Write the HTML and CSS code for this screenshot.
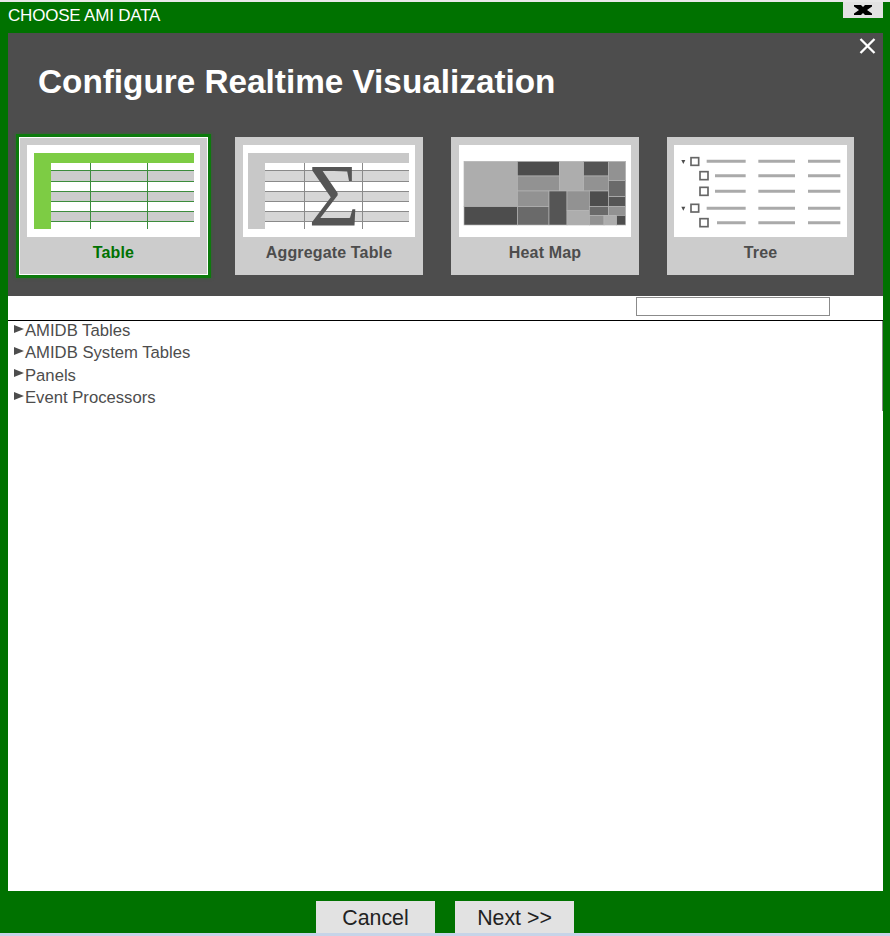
FILE: index.html
```html
<!DOCTYPE html>
<html lang="en">

<head>
  <meta charset="UTF-8">
  <title>Choose AMI Data</title>
  <link rel="stylesheet" href="styles.css">
</head>

<body>
  <div class="window">
    <div class="titlebar">
      <span class="title">CHOOSE AMI DATA</span>
      <button class="win-close" aria-label="Close">
        <svg width="18" height="10" viewBox="0 0 18 10">
          <path d="M0 0h7l2 2 2-2h7v1.500l-5 3.500 5 3.500V10h-7L9 8l-2 2H0V8.500L5 5 0 1.500z" fill="#000" />
        </svg>
      </button>
    </div>

    <div class="dialog">
      <div class="dialog-head">
        <button class="dialog-close" aria-label="Close">
          <svg width="17" height="16" viewBox="0 0 17 16">
            <path d="M1.500 1l14 14M15.500 1l-14 14" stroke="#fff" stroke-width="2.300" fill="none" />
          </svg>
        </button>
        <h1>Configure Realtime Visualization</h1>
        <div class="cards">
          <div class="card selected">
            <svg class="thumb" viewBox="0 0 173 92">
              <rect x="24" y="25" width="143" height="11" fill="#ccc" />
              <rect x="24" y="46" width="143" height="10" fill="#ccc" />
              <rect x="24" y="66" width="143" height="10" fill="#ccc" />
              <path d="M24 25.500h143M24 36.500h143M24 46.500h143M24 56.500h143M24 66.500h143M24 76.500h143M63.500 18v66M120.500 18v66" stroke="#3c8c3c" fill="none" />
              <path d="M7 8h160v10H24v66H7z" fill="#7dcc44" />
            </svg>
            <span>Table</span>
          </div>
          <div class="card">
            <svg class="thumb" viewBox="0 0 172 92">
              <rect x="22" y="25" width="144" height="11" fill="#d6d6d6" />
              <rect x="22" y="46" width="144" height="10" fill="#d6d6d6" />
              <rect x="22" y="66" width="144" height="10" fill="#d6d6d6" />
              <path d="M22 25.500h144M22 36.500h144M22 46.500h144M22 56.500h144M22 66.500h144M22 76.500h144M61.500 18v66M119.500 18v66" stroke="#8a8a8a" fill="none" />
              <path d="M5 8h161v10H22v66H5z" fill="#c8c8c8" />
              <text class="sigma" x="91" y="80">Σ</text>
            </svg>
            <span>Aggregate Table</span>
          </div>
          <div class="card">
            <svg class="thumb heat" viewBox="42 45 516 276">
              <rect x="57" y="94" width="160" height="136" fill="#adadad" />
              <rect x="57" y="230" width="160" height="55" fill="#4d4d4d" />
              <rect x="217" y="94" width="126" height="44" fill="#4d4d4d" />
              <rect x="217" y="138" width="126" height="45" fill="#929292" />
              <rect x="343" y="94" width="73" height="89" fill="#adadad" />
              <rect x="416" y="94" width="74" height="44" fill="#555" />
              <rect x="416" y="138" width="74" height="45" fill="#929292" />
              <rect x="490" y="94" width="52" height="58" fill="#929292" />
              <rect x="490" y="152" width="52" height="48" fill="#6a6a6a" />
              <rect x="217" y="183" width="95" height="47" fill="#929292" />
              <rect x="217" y="230" width="95" height="55" fill="#6a6a6a" />
              <rect x="312" y="183" width="54" height="102" fill="#555" />
              <rect x="366" y="183" width="67" height="58" fill="#929292" />
              <rect x="366" y="241" width="67" height="44" fill="#adadad" />
              <rect x="433" y="183" width="57" height="46" fill="#4d4d4d" />
              <rect x="490" y="200" width="52" height="30" fill="#555" />
              <rect x="433" y="229" width="57" height="27" fill="#6a6a6a" />
              <rect x="490" y="230" width="52" height="26" fill="#929292" />
              <rect x="433" y="256" width="44" height="29" fill="#929292" />
              <rect x="477" y="256" width="38" height="29" fill="#adadad" />
              <rect x="515" y="256" width="27" height="29" fill="#4d4d4d" />
            </svg>
            <span>Heat Map</span>
          </div>
          <div class="card">
            <svg class="thumb" viewBox="57 45 519 276">
              <g fill="#4d4d4d">
                <path d="M79 90h12l-6 12z" />
                <path d="M79 230h12l-6 12z" />
              </g>
              <g fill="#fff" stroke="#666" stroke-width="5">
                <rect x="108" y="83" width="23" height="23" />
                <rect x="135" y="125" width="24" height="24" />
                <rect x="135" y="172" width="24" height="24" />
                <rect x="108" y="223" width="23" height="23" />
                <rect x="135" y="266" width="24" height="24" />
              </g>
              <path d="M155 94h117M310 94h110M459 94h97M180 137h92M310 137h110M459 137h97M180 184h92M310 184h110M459 184h97M155 235h117M310 235h110M459 235h97M186 278h86M310 278h110M459 278h97" stroke="#aaa" stroke-width="9" fill="none" />
            </svg>
            <span>Tree</span>
          </div>
        </div>
      </div>

      <div class="search-row">
        <input class="search" type="text">
      </div>

      <div class="tree">
        <div class="tree-item"><i class="arrow"></i>AMIDB Tables</div>
        <div class="tree-item"><i class="arrow"></i>AMIDB System Tables</div>
        <div class="tree-item"><i class="arrow"></i>Panels</div>
        <div class="tree-item"><i class="arrow"></i>Event Processors</div>
      </div>
    </div>

    <div class="footer">
      <button class="btn">Cancel</button>
      <button class="btn">Next &gt;&gt;</button>
    </div>
  </div>
</body>

</html>
```

FILE: styles.css
```css
html,
body {
  margin: 0;
  padding: 0;
  height: 100%;
  overflow: hidden;
}

body {
  font-family: 'Liberation Sans', Arial, sans-serif;
  background-color: #c6d4e8;
}

.window {
  height: 931px;
  margin-top: 2px;
  box-shadow: 0 -2px 0 #e8e8e8;
  background-color: #007200;
  display: flex;
  flex-direction: column;
}

.titlebar {
  height: 31px;
  flex: none;
  display: flex;
  justify-content: space-between;
  align-items: flex-start;
  padding: 0 7px 0 8px;
}

.title {
  color: #fff;
  font-size: 17px;
  letter-spacing: -0.2px;
  line-height: 27px;
}

.win-close {
  width: 40px;
  height: 16px;
  padding: 0;
  border: none;
  background-color: #e2e2e2;
  display: flex;
  align-items: flex-start;
  justify-content: center;
}

.win-close svg {
  margin-top: 3px;
}

.dialog {
  flex: 1;
  margin: 0 7px 0 8px;
  background-color: #fff;
  display: flex;
  flex-direction: column;
  min-height: 0;
}

.dialog-head {
  height: 263px;
  flex: none;
  background-color: #4d4d4d;
  position: relative;
}

.dialog-close {
  position: absolute;
  top: 5px;
  right: 7px;
  width: 17px;
  height: 16px;
  padding: 0;
  border: none;
  background: none;
}

h1 {
  margin: 0;
  padding: 29px 0 0 30px;
  box-sizing: border-box;
  height: 104px;
  color: #fff;
  font-size: 33.3px;
  line-height: 40px;
  font-weight: bold;
}

.cards {
  display: flex;
  gap: 28px;
  padding-left: 11px;
}

.card {
  width: 188px;
  height: 138px;
  box-sizing: border-box;
  padding: 8px 8px 0;
  background-color: #ccc;
  display: flex;
  flex-direction: column;
  align-items: center;
  color: #4d4d4d;
  font-size: 16px;
  font-weight: bold;
  letter-spacing: 0.15px;
}

.card:last-child {
  width: 187px;
  padding: 8px 7px 0;
}

.card span {
  margin-top: 8px;
  line-height: 16px;
}

.card.selected {
  width: 189px;
  margin-right: -1px;
  color: #007200;
  box-shadow: inset 0 0 0 1px #fff, 0 0 0 3px #0c7a0c, 0 0 2px 4px #3c5c3c;
}

.thumb {
  display: block;
  width: 172px;
  height: 92px;
  flex: none;
  background-color: #fff;
  overflow: visible;
}

.selected .thumb,
.card:last-child .thumb {
  width: 173px;
}

.heat rect {
  stroke: #b4b4b4;
  stroke-width: 2;
}

.sigma {
  font-family: 'Liberation Serif', serif;
  font-size: 88px;
  font-weight: normal;
  letter-spacing: 0;
  fill: #555;
  text-anchor: middle;
}

.search-row {
  height: 24px;
  flex: none;
  border-bottom: 1px solid #000;
}

.search {
  display: block;
  margin: 1px 0 0 628px;
  width: 194px;
  height: 19px;
  box-sizing: border-box;
  border: 1px solid #8b8b8b;
  padding: 0;
  background-color: #fff;
}

.tree {
  height: 90px;
  box-sizing: border-box;
  border-right: 1px solid #888;
  color: #4d4d4d;
  font-size: 16.67px;
}

.tree-item {
  height: 22.3px;
  line-height: 20px;
  display: flex;
  align-items: center;
  padding-left: 6px;
  position: relative;
  top: -1px;
}

.arrow {
  width: 0;
  height: 0;
  border-left: 10px solid #4d4d4d;
  border-top: 4px solid transparent;
  border-bottom: 4px solid transparent;
  margin: -5px 1px 0 0;
}

.footer {
  height: 42px;
  flex: none;
  display: flex;
  justify-content: center;
  align-items: flex-end;
  gap: 20px;
}

.btn {
  width: 119px;
  height: 32px;
  padding: 3px 0 0;
  border: none;
  background-color: #e2e2e2;
  color: #222;
  font-family: 'Liberation Sans', Arial, sans-serif;
  font-size: 21.33px;
}
```
